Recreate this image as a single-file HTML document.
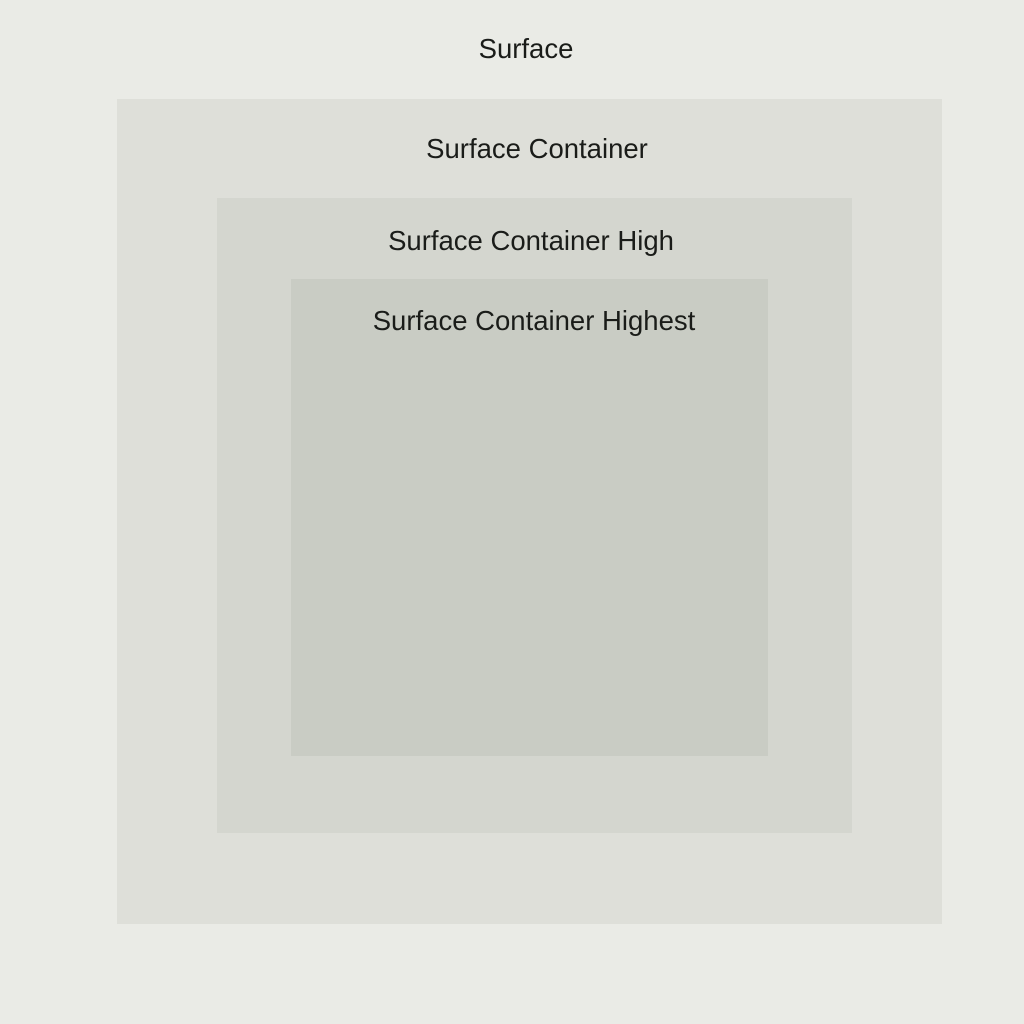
<!DOCTYPE html>
<html><head><meta charset="utf-8"><style>
html,body{margin:0;padding:0;width:1024px;height:1024px;background:#eaebe6;overflow:hidden}
.b{position:absolute}
.t{position:absolute;width:600px;text-align:center;font-family:"Liberation Sans",sans-serif;font-size:27.5px;color:#1a1c19;line-height:30px}
</style></head><body>
<div class="b" style="left:117px;top:99px;width:825px;height:825px;background:#dedfd9"></div>
<div class="b" style="left:217px;top:198px;width:635px;height:635px;background:#d4d6cf"></div>
<div class="b" style="left:291px;top:279px;width:477px;height:477px;background:#c9ccc4"></div>
<div class="t" style="left:226px;top:34px">Surface</div>
<div class="t" style="left:237px;top:134px">Surface Container</div>
<div class="t" style="left:231px;top:226px">Surface Container High</div>
<div class="t" style="left:234px;top:306px">Surface Container Highest</div>
</body></html>
